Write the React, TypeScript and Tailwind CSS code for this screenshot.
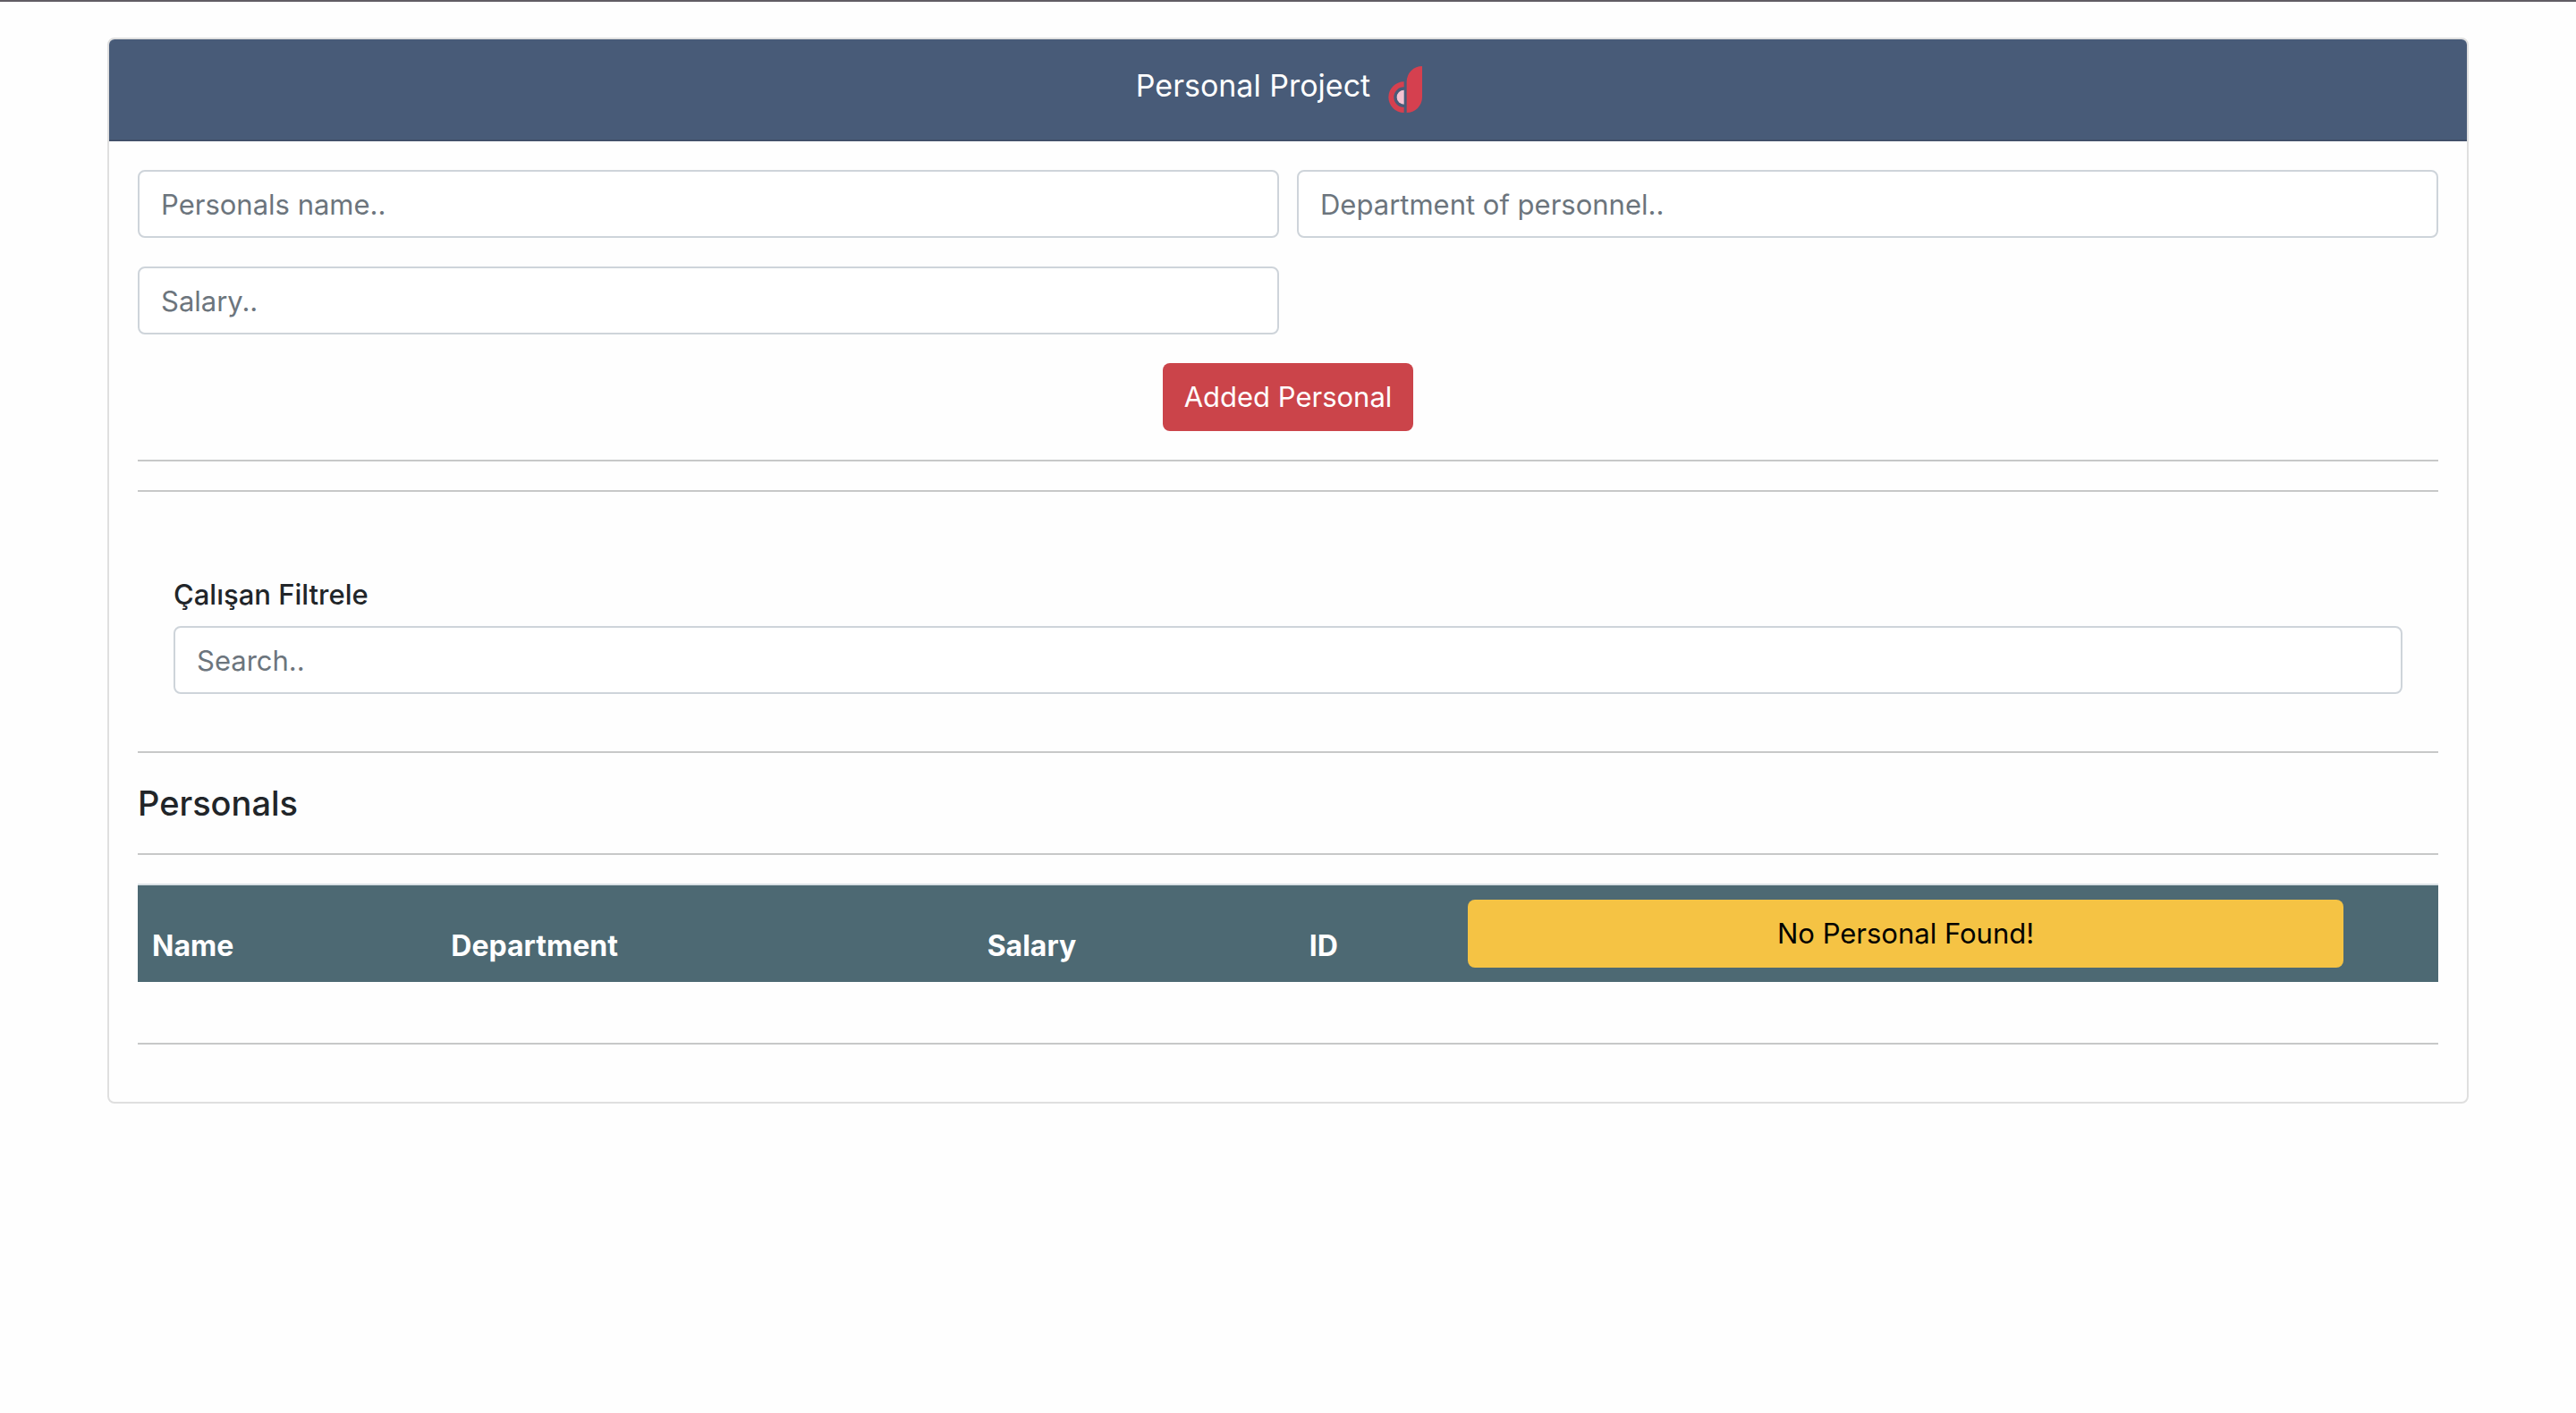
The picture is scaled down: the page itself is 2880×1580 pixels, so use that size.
import type { ComponentProps } from "react";

function Logo() {
  return (
    <svg viewBox="0 0 114 156" className="mx-5 h-[52px] w-[38px]" role="img" aria-label="Logo">
      <path d="M114 0v104a52 52 0 0 1-52 52V52A52 52 0 0 1 114 0Z" fill="#d5404f" />
      <path d="M53 52v18a34 34 0 0 0 0 68v18a52 52 0 0 1 0-104Z" fill="#d5404f" />
      <path d="M53 80v48a24 24 0 0 1 0-48Z" fill="#f5c3d2" />
    </svg>
  );
}

function TextField({ label, ...props }: { label: string } & ComponentProps<"input">) {
  return (
    <input
      type="text"
      aria-label={label}
      placeholder={label}
      className="h-[76px] w-full rounded-lg border-2 border-[#ced4da] bg-white px-6 text-[31px] text-[#212529] placeholder:text-[#6c757d] placeholder:opacity-100"
      {...props}
    />
  );
}

function Rule() {
  return <hr className="border-t-2 border-[#c7c8c8]" />;
}

export default function App() {
  return (
    <div className="min-h-screen border-t-2 border-[#615d64] bg-[#fefefe] px-4 pt-10 font-['Inter',sans-serif] text-[31px] leading-[48px] text-[#212529]">
      <main className="mx-auto max-w-[2640px] overflow-hidden rounded-lg border-2 border-[#dfdfdf]">
        <header className="flex items-center justify-center border-b-2 border-[#415069] bg-[#485b78] py-[30px] text-white">
          <h1 className="mb-2 text-[34px] leading-[44px]">Personal Project</h1>
          <Logo />
        </header>

        <div className="flex flex-col gap-8 px-8 pt-8 pb-16">
          <form className="grid grid-cols-2 gap-x-5 gap-y-8">
            <TextField label="Personals name.." name="name" />
            <TextField label="Department of personnel.." name="department" />
            <TextField label="Salary.." name="salary" />
            <button
              type="button"
              className="col-span-2 h-[76px] justify-self-center rounded-lg bg-[#cb444a] px-6 text-white"
            >
              Added Personal
            </button>
          </form>

          <Rule />
          <Rule />

          <section className="px-10 py-8 pt-16">
            <label htmlFor="search" className="mb-4 block leading-[38px] font-medium">
              Çalışan Filtrele
            </label>
            <TextField id="search" label="Search.." name="search" />
          </section>

          <Rule />
          <h2 className="text-[38px] leading-[48px] font-medium">Personals</h2>
          <Rule />

          <div className="mb-9 border-t-2 border-[#dbe2e6]">
            <table className="w-full table-fixed border-collapse text-left">
              <colgroup>
                <col className="w-[13%]" />
                <col className="w-[23.3%]" />
                <col className="w-[14%]" />
                <col className="w-[6.9%]" />
                <col className="w-[39.3%]" />
                <col />
              </colgroup>
              <thead>
                <tr className="bg-[#4d6973] align-bottom text-[32px] text-white">
                  <th className="p-4 font-bold">Name</th>
                  <th className="p-4 font-bold">Department</th>
                  <th className="p-4 font-bold">Salary</th>
                  <th className="p-4 font-bold">ID</th>
                  <td className="p-4">
                    <button
                      type="button"
                      className="block h-[76px] w-full rounded-lg bg-[#f5c344] text-[31px] text-black"
                    >
                      No Personal Found!
                    </button>
                  </td>
                  <td />
                </tr>
              </thead>
            </table>
          </div>

          <Rule />
        </div>
      </main>
    </div>
  );
}
